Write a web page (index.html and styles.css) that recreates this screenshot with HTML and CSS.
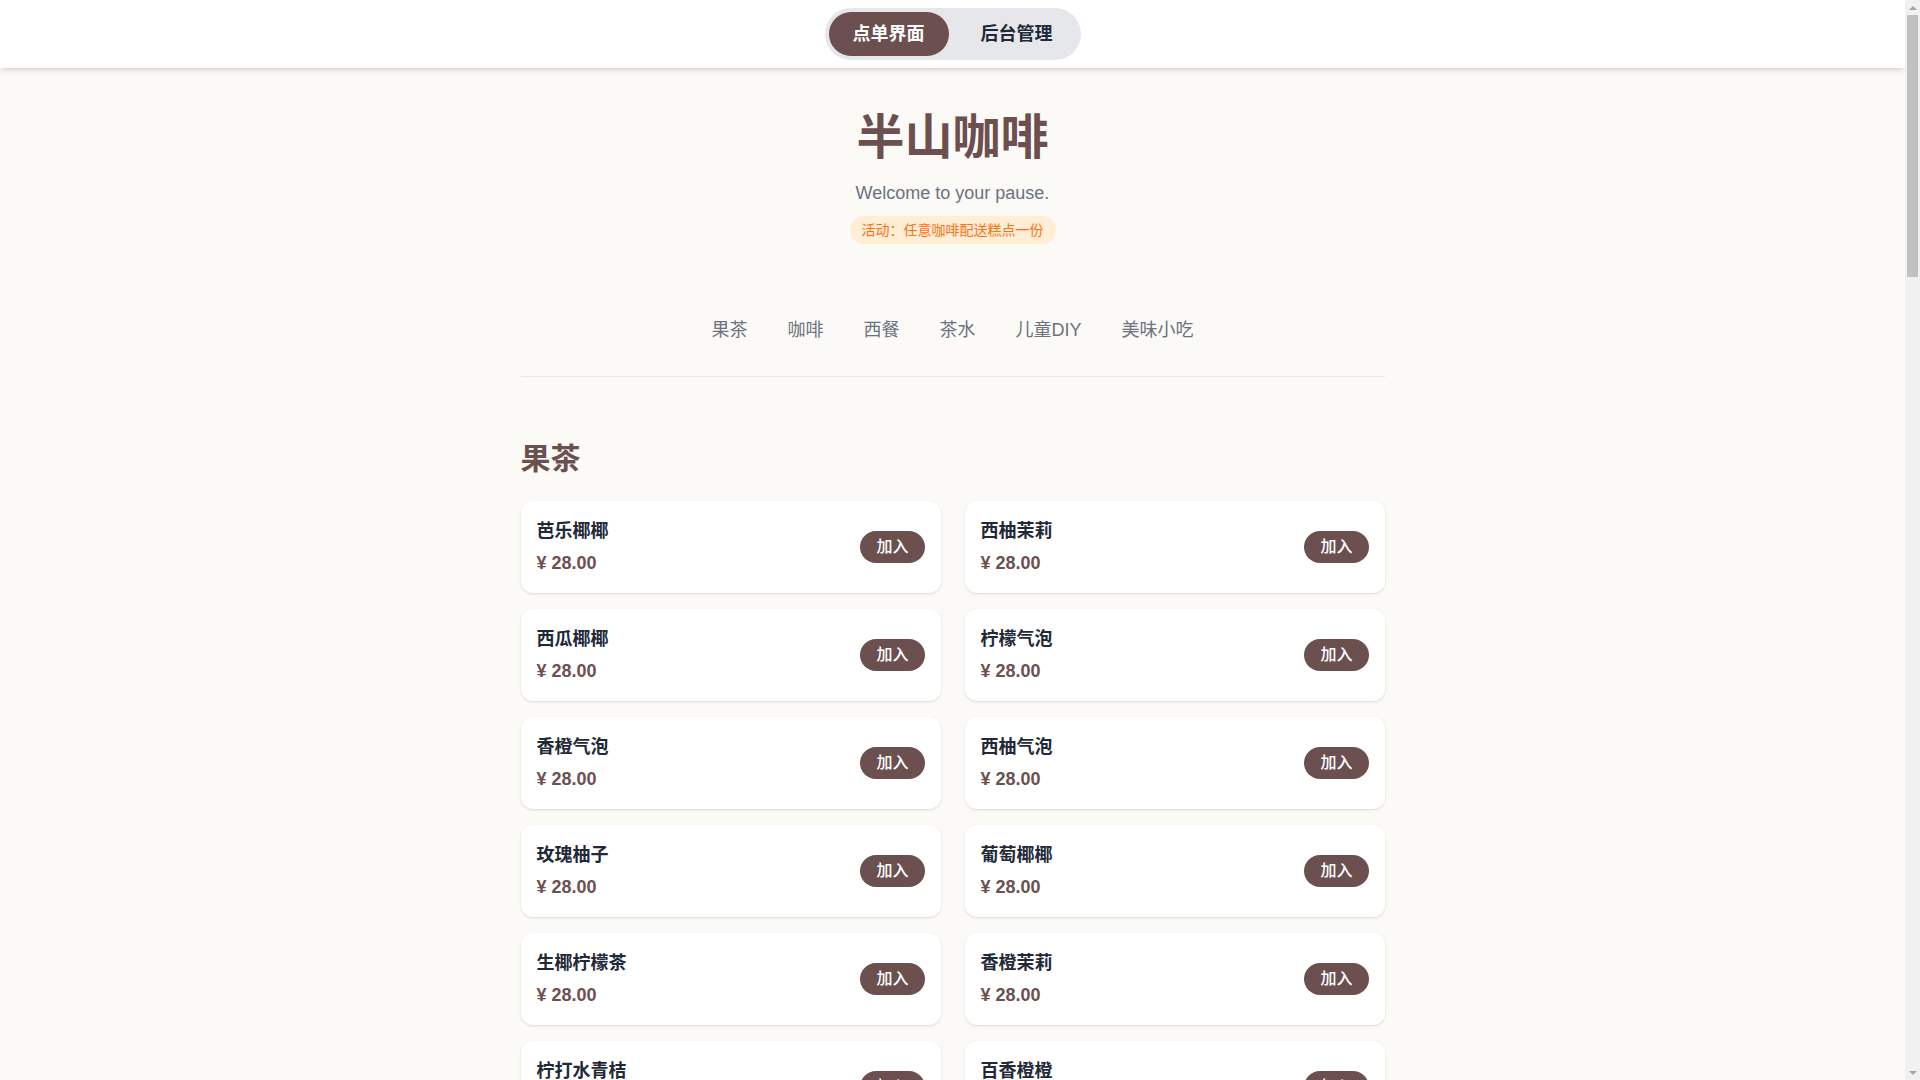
FILE: index.html
```html
<!DOCTYPE html>
<html lang="zh-CN">
<head>
<meta charset="utf-8">
<title>半山咖啡</title>
<link rel="stylesheet" href="styles.css">
</head>
<body>
<header class="topbar">
  <div class="switch">
    <button class="switch-btn active">点单界面</button>
    <button class="switch-btn">后台管理</button>
  </div>
</header>

<div class="page">
  <section class="hero">
    <h1 class="brand">半山咖啡</h1>
    <p class="tagline">Welcome to your pause.</p>
    <span class="promo">活动：任意咖啡配送糕点一份</span>
  </section>

  <nav class="cats">
    <a class="cat">果茶</a>
    <a class="cat">咖啡</a>
    <a class="cat">西餐</a>
    <a class="cat">茶水</a>
    <a class="cat">儿童DIY</a>
    <a class="cat">美味小吃</a>
  </nav>

  <main class="menu">
    <section class="group">
      <h2 class="group-title">果茶</h2>
      <div class="grid">
        <div class="card"><div class="info"><div class="name">芭乐椰椰</div><div class="price">¥ 28.00</div></div><button class="add">加入</button></div>
        <div class="card"><div class="info"><div class="name">西柚茉莉</div><div class="price">¥ 28.00</div></div><button class="add">加入</button></div>
        <div class="card"><div class="info"><div class="name">西瓜椰椰</div><div class="price">¥ 28.00</div></div><button class="add">加入</button></div>
        <div class="card"><div class="info"><div class="name">柠檬气泡</div><div class="price">¥ 28.00</div></div><button class="add">加入</button></div>
        <div class="card"><div class="info"><div class="name">香橙气泡</div><div class="price">¥ 28.00</div></div><button class="add">加入</button></div>
        <div class="card"><div class="info"><div class="name">西柚气泡</div><div class="price">¥ 28.00</div></div><button class="add">加入</button></div>
        <div class="card"><div class="info"><div class="name">玫瑰柚子</div><div class="price">¥ 28.00</div></div><button class="add">加入</button></div>
        <div class="card"><div class="info"><div class="name">葡萄椰椰</div><div class="price">¥ 28.00</div></div><button class="add">加入</button></div>
        <div class="card"><div class="info"><div class="name">生椰柠檬茶</div><div class="price">¥ 28.00</div></div><button class="add">加入</button></div>
        <div class="card"><div class="info"><div class="name">香橙茉莉</div><div class="price">¥ 28.00</div></div><button class="add">加入</button></div>
        <div class="card"><div class="info"><div class="name">柠打水青桔</div><div class="price">¥ 28.00</div></div><button class="add">加入</button></div>
        <div class="card"><div class="info"><div class="name">百香橙橙</div><div class="price">¥ 28.00</div></div><button class="add">加入</button></div>
        <div class="card"><div class="info"><div class="name">芒果椰椰</div><div class="price">¥ 28.00</div></div><button class="add">加入</button></div>
        <div class="card"><div class="info"><div class="name">草莓气泡</div><div class="price">¥ 28.00</div></div><button class="add">加入</button></div>
      </div>
    </section>

    <section class="group">
      <h2 class="group-title">咖啡</h2>
      <div class="grid">
        <div class="card"><div class="info"><div class="name">美式咖啡</div><div class="price">¥ 22.00</div></div><button class="add">加入</button></div>
        <div class="card"><div class="info"><div class="name">拿铁咖啡</div><div class="price">¥ 26.00</div></div><button class="add">加入</button></div>
        <div class="card"><div class="info"><div class="name">卡布奇诺</div><div class="price">¥ 26.00</div></div><button class="add">加入</button></div>
        <div class="card"><div class="info"><div class="name">澳白</div><div class="price">¥ 28.00</div></div><button class="add">加入</button></div>
        <div class="card"><div class="info"><div class="name">生椰拿铁</div><div class="price">¥ 28.00</div></div><button class="add">加入</button></div>
        <div class="card"><div class="info"><div class="name">焦糖玛奇朵</div><div class="price">¥ 30.00</div></div><button class="add">加入</button></div>
        <div class="card"><div class="info"><div class="name">摩卡咖啡</div><div class="price">¥ 30.00</div></div><button class="add">加入</button></div>
        <div class="card"><div class="info"><div class="name">香草拿铁</div><div class="price">¥ 28.00</div></div><button class="add">加入</button></div>
        <div class="card"><div class="info"><div class="name">橙C美式</div><div class="price">¥ 26.00</div></div><button class="add">加入</button></div>
        <div class="card"><div class="info"><div class="name">冰滴咖啡</div><div class="price">¥ 32.00</div></div><button class="add">加入</button></div>
        <div class="card"><div class="info"><div class="name">手冲咖啡</div><div class="price">¥ 38.00</div></div><button class="add">加入</button></div>
        <div class="card"><div class="info"><div class="name">意式浓缩</div><div class="price">¥ 20.00</div></div><button class="add">加入</button></div>
        <div class="card"><div class="info"><div class="name">桂花拿铁</div><div class="price">¥ 28.00</div></div><button class="add">加入</button></div>
        <div class="card"><div class="info"><div class="name">燕麦拿铁</div><div class="price">¥ 28.00</div></div><button class="add">加入</button></div>
        <div class="card"><div class="info"><div class="name">椰子冷萃</div><div class="price">¥ 30.00</div></div><button class="add">加入</button></div>
        <div class="card"><div class="info"><div class="name">脏脏咖啡</div><div class="price">¥ 30.00</div></div><button class="add">加入</button></div>
      </div>
    </section>

    <section class="group">
      <h2 class="group-title">西餐</h2>
      <div class="grid">
        <div class="card"><div class="info"><div class="name">意式肉酱面</div><div class="price">¥ 38.00</div></div><button class="add">加入</button></div>
        <div class="card"><div class="info"><div class="name">奶油培根面</div><div class="price">¥ 38.00</div></div><button class="add">加入</button></div>
        <div class="card"><div class="info"><div class="name">黑椒牛排</div><div class="price">¥ 68.00</div></div><button class="add">加入</button></div>
        <div class="card"><div class="info"><div class="name">香煎鸡排</div><div class="price">¥ 42.00</div></div><button class="add">加入</button></div>
        <div class="card"><div class="info"><div class="name">凯撒沙拉</div><div class="price">¥ 32.00</div></div><button class="add">加入</button></div>
        <div class="card"><div class="info"><div class="name">牛肉汉堡</div><div class="price">¥ 36.00</div></div><button class="add">加入</button></div>
        <div class="card"><div class="info"><div class="name">总汇三明治</div><div class="price">¥ 32.00</div></div><button class="add">加入</button></div>
        <div class="card"><div class="info"><div class="name">玛格丽特披萨</div><div class="price">¥ 48.00</div></div><button class="add">加入</button></div>
      </div>
    </section>

    <section class="group">
      <h2 class="group-title">茶水</h2>
      <div class="grid">
        <div class="card"><div class="info"><div class="name">茉莉花茶</div><div class="price">¥ 18.00</div></div><button class="add">加入</button></div>
        <div class="card"><div class="info"><div class="name">铁观音</div><div class="price">¥ 28.00</div></div><button class="add">加入</button></div>
        <div class="card"><div class="info"><div class="name">普洱茶</div><div class="price">¥ 28.00</div></div><button class="add">加入</button></div>
        <div class="card"><div class="info"><div class="name">大红袍</div><div class="price">¥ 38.00</div></div><button class="add">加入</button></div>
        <div class="card"><div class="info"><div class="name">白桃乌龙</div><div class="price">¥ 22.00</div></div><button class="add">加入</button></div>
        <div class="card"><div class="info"><div class="name">柠檬红茶</div><div class="price">¥ 18.00</div></div><button class="add">加入</button></div>
        <div class="card"><div class="info"><div class="name">菊花茶</div><div class="price">¥ 18.00</div></div><button class="add">加入</button></div>
        <div class="card"><div class="info"><div class="name">龙井绿茶</div><div class="price">¥ 32.00</div></div><button class="add">加入</button></div>
      </div>
    </section>

    <section class="group">
      <h2 class="group-title">儿童DIY</h2>
      <div class="grid">
        <div class="card"><div class="info"><div class="name">饼干DIY</div><div class="price">¥ 38.00</div></div><button class="add">加入</button></div>
        <div class="card"><div class="info"><div class="name">蛋糕DIY</div><div class="price">¥ 58.00</div></div><button class="add">加入</button></div>
        <div class="card"><div class="info"><div class="name">披萨DIY</div><div class="price">¥ 48.00</div></div><button class="add">加入</button></div>
        <div class="card"><div class="info"><div class="name">彩绘杯子</div><div class="price">¥ 38.00</div></div><button class="add">加入</button></div>
      </div>
    </section>

    <section class="group">
      <h2 class="group-title">美味小吃</h2>
      <div class="grid">
        <div class="card"><div class="info"><div class="name">薯条</div><div class="price">¥ 16.00</div></div><button class="add">加入</button></div>
        <div class="card"><div class="info"><div class="name">鸡米花</div><div class="price">¥ 18.00</div></div><button class="add">加入</button></div>
        <div class="card"><div class="info"><div class="name">洋葱圈</div><div class="price">¥ 16.00</div></div><button class="add">加入</button></div>
        <div class="card"><div class="info"><div class="name">鸡翅</div><div class="price">¥ 22.00</div></div><button class="add">加入</button></div>
        <div class="card"><div class="info"><div class="name">芝士条</div><div class="price">¥ 20.00</div></div><button class="add">加入</button></div>
        <div class="card"><div class="info"><div class="name">提拉米苏</div><div class="price">¥ 26.00</div></div><button class="add">加入</button></div>
      </div>
    </section>
  </main>
</div>

<div class="fake-scrollbar" aria-hidden="true">
  <span class="sb-arrow sb-up"></span>
  <span class="sb-thumb"></span>
  <span class="sb-fill"></span>
  <span class="sb-arrow sb-down"></span>
</div>
</body>
</html>
```

FILE: styles.css
```css
* { box-sizing: border-box; }

html, body {
  margin: 0;
  padding: 0;
}

body {
  padding-right: 15px;
  background: #fbfaf6;
  font-family: "Liberation Sans", "Noto Sans CJK SC", sans-serif;
  color: #1f2937;
}

/* Scrollbar look of the reference window (overlay at the right edge) */
.fake-scrollbar {
  position: fixed;
  top: 0;
  right: 0;
  width: 15px;
  height: 100vh;
  z-index: 20;
  background: #f1f1f1;
  display: flex;
  flex-direction: column;
  align-items: center;
}

.sb-arrow {
  flex: 0 0 15px;
  width: 15px;
  display: flex;
  align-items: center;
  justify-content: center;
}

.sb-arrow::before {
  content: "";
  width: 0;
  height: 0;
  border-left: 4px solid transparent;
  border-right: 4px solid transparent;
}

.sb-up::before {
  border-bottom: 4px solid #a3a3a3;
}

.sb-down::before {
  border-top: 4px solid #a3a3a3;
}

.sb-thumb {
  flex: 0 0 262px;
  width: 11px;
  background: #c1c1c1;
}

.sb-fill {
  flex: 1;
}

.topbar {
  position: sticky;
  top: 0;
  z-index: 10;
  background: #ffffff;
  display: flex;
  justify-content: center;
  padding: 8px 0;
  box-shadow: 0 4px 6px -1px rgba(0,0,0,0.1), 0 2px 4px -2px rgba(0,0,0,0.1);
}

.switch {
  display: flex;
  gap: 8px;
  padding: 4px;
  background: #e5e7eb;
  border-radius: 9999px;
}

.switch-btn {
  border: 0;
  background: transparent;
  font-family: inherit;
  font-size: 18px;
  line-height: 28px;
  font-weight: 700;
  color: #1f2937;
  padding: 8px 24px;
  border-radius: 9999px;
  cursor: pointer;
}

.switch-btn.active {
  background: #6c504f;
  color: #ffffff;
}

.page {
  max-width: 896px;
  margin: 0 auto;
  padding: 0 16px 64px;
}

.hero {
  text-align: center;
  padding-top: 46px;
}

.brand {
  margin: 0 0 17px;
  font-size: 48px;
  line-height: 48px;
  font-weight: 700;
  color: #6c504f;
}

.tagline {
  margin: 0 0 9px;
  font-size: 18px;
  line-height: 28px;
  color: #6b7280;
}

.promo {
  display: inline-block;
  padding: 4px 12px;
  font-size: 14px;
  line-height: 20px;
  color: #f97316;
  background: #ffedd5;
  border-radius: 9999px;
}

.cats {
  display: flex;
  justify-content: center;
  gap: 40px;
  margin-top: 72px;
  padding-bottom: 32px;
  border-bottom: 1px solid #e5e7eb;
}

.cat {
  font-size: 18px;
  line-height: 28px;
  color: #6b7280;
  cursor: pointer;
}

.menu {
  padding-top: 64px;
}

.group {
  margin-bottom: 48px;
}

.group-title {
  margin: 0 0 24px;
  font-size: 30px;
  line-height: 36px;
  font-weight: 700;
  color: #6c504f;
}

.grid {
  display: grid;
  grid-template-columns: 1fr 1fr;
  column-gap: 24px;
  row-gap: 16px;
}

.card {
  display: flex;
  align-items: center;
  justify-content: space-between;
  background: #ffffff;
  border-radius: 12px;
  padding: 16px;
  box-shadow: 0 1px 3px rgba(0,0,0,0.1), 0 1px 2px -1px rgba(0,0,0,0.1);
}

.name {
  font-size: 18px;
  line-height: 28px;
  font-weight: 700;
  color: #1f2937;
}

.price {
  margin-top: 4px;
  font-size: 18px;
  line-height: 28px;
  font-weight: 700;
  color: #6c504f;
}

.add {
  border: 0;
  background: #6c504f;
  color: #ffffff;
  font-family: inherit;
  font-size: 16px;
  line-height: 24px;
  font-weight: 500;
  padding: 4px 16px;
  border-radius: 9999px;
  cursor: pointer;
}
```
